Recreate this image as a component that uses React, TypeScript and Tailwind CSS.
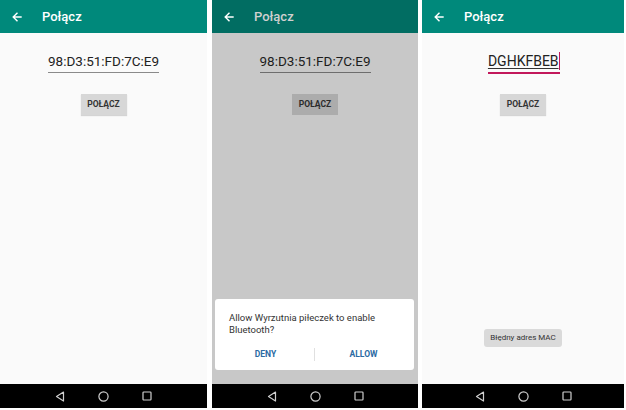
import React from "react";

const font = { fontFamily: "Roboto, 'Noto Sans', sans-serif" };

function Arrow() {
  return (
    <svg width="10" height="10" viewBox="0 0 10 10" fill="none" stroke="white" strokeWidth="1.4" strokeLinecap="square">
      <path d="M9 5H1.5M5 1.2L1.2 5L5 8.8" />
    </svg>
  );
}

function NavBar() {
  return (
    <div className="h-[24px] bg-black flex items-center justify-center gap-[33px]">
      <svg width="10" height="11" viewBox="0 0 10 11" fill="none" stroke="#cfcfcf" strokeWidth="1.2">
        <path d="M8.5 1L1.5 5.5L8.5 10Z" strokeLinejoin="round" />
      </svg>
      <svg width="11" height="11" viewBox="0 0 11 11" fill="none" stroke="#cfcfcf" strokeWidth="1.2">
        <circle cx="5.5" cy="5.5" r="4.6" />
      </svg>
      <svg width="10" height="10" viewBox="0 0 10 10" fill="none" stroke="#cfcfcf" strokeWidth="1.2">
        <rect x="1" y="1" width="8" height="8" rx="0.8" />
      </svg>
    </div>
  );
}

function Header({ dark }: { dark?: boolean }) {
  return (
    <div className={`h-[33px] flex items-center px-[12px] ${dark ? "bg-[#016d62]" : "bg-[#00897b]"}`}>
      <Arrow />
      <span className={`ml-[20px] text-[13px] font-medium ${dark ? "text-[#d0d0d0]" : "text-white"}`}>Połącz</span>
    </div>
  );
}

export default function App() {
  return (
    <div className="w-[626px] h-[410px] bg-white flex items-start" style={font}>
      {/* Phone 1 */}
      <div className="w-[207px] h-[408px] flex flex-col bg-[#fafafa]">
        <Header />
        <div className="flex-1 flex flex-col items-center">
          <div className="mt-[18px] w-[111px] border-b border-[#8a8a8a] text-center text-[13.5px] leading-[20px] pb-[1px] text-[#222]">
            98:D3:51:FD:7C:E9
          </div>
          <div className="mt-[21px] w-[46px] h-[21px] bg-[#d7d7d7] flex items-center justify-center text-[8.5px] font-bold text-[#333] shadow-[0_1px_1px_rgba(0,0,0,0.15)]">
            POŁĄCZ
          </div>
        </div>
        <NavBar />
      </div>

      {/* Phone 2 */}
      <div className="ml-[5px] w-[206px] h-[408px] flex flex-col bg-[#c8c8c8]">
        <Header dark />
        <div className="flex-1 flex flex-col items-center relative">
          <div className="mt-[18px] w-[111px] border-b border-[#6e6e6e] text-center text-[13.5px] leading-[20px] pb-[1px] text-[#1c1c1c]">
            98:D3:51:FD:7C:E9
          </div>
          <div className="mt-[21px] w-[46px] h-[21px] bg-[#acacac] flex items-center justify-center text-[8.5px] font-bold text-[#2a2a2a]">
            POŁĄCZ
          </div>
          <div className="absolute left-[3px] right-[4px] bottom-[14px] h-[71px] bg-white rounded-[3px] flex flex-col">
            <div className="pl-[14px] pt-[13px] text-[9.5px] leading-[12px] text-[#333]">
              Allow Wyrzutnia piłeczek to enable
              <br />
              Bluetooth?
            </div>
            <div className="flex-1 flex items-center pt-[3px]">
              <div className="flex-1 text-center text-[8.5px] font-bold text-[#2b6aa3] pl-[2px]">DENY</div>
              <div className="w-px h-[13px] bg-[#e0e0e0]" />
              <div className="flex-1 text-center text-[8.5px] font-bold text-[#2b6aa3] pr-[2px]">ALLOW</div>
            </div>
          </div>
        </div>
        <NavBar />
      </div>

      {/* Phone 3 */}
      <div className="ml-[4px] w-[202px] h-[408px] flex flex-col bg-[#fafafa]">
        <Header />
        <div className="flex-1 flex flex-col items-center relative">
          <div className="mt-[18px] flex items-end border-b-2 border-[#c2185b] pb-[1px] ml-[2px]">
            <span className="text-[14px] leading-[20px] text-[#222] underline decoration-[#333] underline-offset-[2px]">DGHKFBEB</span>
            <span className="w-[1.5px] h-[18px] bg-[#c2185b] mb-[1px]" />
          </div>
          <div className="mt-[20px] w-[46px] h-[21px] bg-[#d7d7d7] flex items-center justify-center text-[8.5px] font-bold text-[#333] shadow-[0_1px_1px_rgba(0,0,0,0.15)]">
            POŁĄCZ
          </div>
          <div className="absolute bottom-[37px] left-1/2 -translate-x-1/2 w-[78px] h-[18px] rounded-[3px] bg-[#dadada] flex items-center justify-center text-[8px] text-[#333] whitespace-nowrap">
            Błędny adres MAC
          </div>
        </div>
        <NavBar />
      </div>
    </div>
  );
}
